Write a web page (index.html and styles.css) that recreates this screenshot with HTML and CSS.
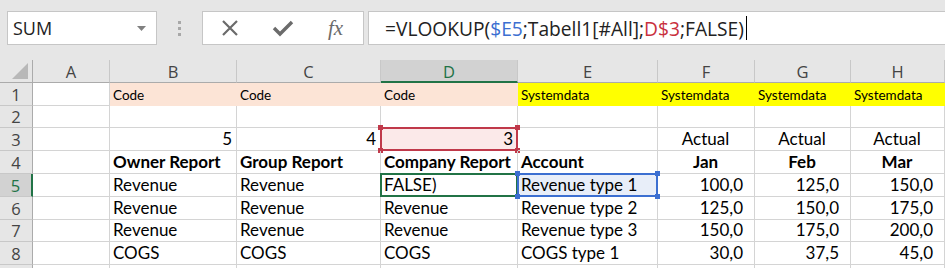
FILE: index.html
```html
<!DOCTYPE html>
<html>
<head>
  <meta charset="UTF-8">
  <title>Book1 - Excel</title>
  <link rel="stylesheet" href="styles.css">
</head>
<body>
  <div class="app">
    <div class="formula-bar">
      <div class="name-box">
        <span>SUM</span>
        <svg class="dropdown" width="9" height="5" viewBox="0 0 9 5"><path d="M0 0H9L4.5 5Z" fill="#808080"/></svg>
      </div>
      <div class="grip"><i></i><i></i><i></i></div>
      <div class="fx-buttons">
        <svg width="20" height="20" viewBox="0 0 20 20"><path d="M3 3L17 17M17 3L3 17" stroke="#6b6b6b" stroke-width="2.2" fill="none"/></svg>
        <svg class="check" width="22" height="20" viewBox="0 0 22 20"><path d="M2 10L8 16L20 4" stroke="#6b6b6b" stroke-width="3.4" fill="none"/></svg>
        <span class="fx">fx</span>
      </div>
      <div class="formula-input">=VLOOKUP(<span class="ref-blue">$E5</span>;Tabell1[#All];<span class="ref-red">D$3</span>;FALSE)<span class="caret"></span></div>
    </div>

    <div class="sheet">
      <!-- column headers -->
      <div class="hd corner"><span class="tri"></span></div>
      <div class="hd">A</div>
      <div class="hd">B</div>
      <div class="hd">C</div>
      <div class="hd hd-active">D</div>
      <div class="hd">E</div>
      <div class="hd">F</div>
      <div class="hd">G</div>
      <div class="hd">H</div>

      <!-- row 1 -->
      <div class="rh">1</div>
      <div class="c"></div>
      <div class="c small fill-orange">Code</div>
      <div class="c small fill-orange">Code</div>
      <div class="c small fill-orange">Code</div>
      <div class="c small fill-yellow">Systemdata</div>
      <div class="c small fill-yellow">Systemdata</div>
      <div class="c small fill-yellow">Systemdata</div>
      <div class="c small fill-yellow">Systemdata</div>

      <!-- row 2 -->
      <div class="rh">2</div>
      <div class="c"></div>
      <div class="c"></div>
      <div class="c"></div>
      <div class="c"></div>
      <div class="c"></div>
      <div class="c"></div>
      <div class="c"></div>
      <div class="c"></div>

      <!-- row 3 -->
      <div class="rh">3</div>
      <div class="c"></div>
      <div class="c right">5</div>
      <div class="c right">4</div>
      <div class="c right fill-pink">3<span class="sel sel-red"><i class="h tl"></i><i class="h tr"></i><i class="h bl"></i><i class="h br"></i></span></div>
      <div class="c"></div>
      <div class="c center">Actual</div>
      <div class="c center">Actual</div>
      <div class="c center">Actual</div>

      <!-- row 4 -->
      <div class="rh">4</div>
      <div class="c"></div>
      <div class="c bold">Owner Report</div>
      <div class="c bold">Group Report</div>
      <div class="c bold">Company Report</div>
      <div class="c bold">Account</div>
      <div class="c bold center">Jan</div>
      <div class="c bold center">Feb</div>
      <div class="c bold center">Mar</div>

      <!-- row 5 -->
      <div class="rh rh-active">5</div>
      <div class="c"></div>
      <div class="c">Revenue</div>
      <div class="c">Revenue</div>
      <div class="c">FALSE)<span class="sel sel-green"></span></div>
      <div class="c fill-blue">Revenue type 1<span class="sel sel-blue"><i class="h tl"></i><i class="h tr"></i><i class="h bl"></i><i class="h br"></i></span></div>
      <div class="c num">100,0</div>
      <div class="c num">125,0</div>
      <div class="c num">150,0</div>

      <!-- row 6 -->
      <div class="rh">6</div>
      <div class="c"></div>
      <div class="c">Revenue</div>
      <div class="c">Revenue</div>
      <div class="c">Revenue</div>
      <div class="c">Revenue type 2</div>
      <div class="c num">125,0</div>
      <div class="c num">150,0</div>
      <div class="c num">175,0</div>

      <!-- row 7 -->
      <div class="rh">7</div>
      <div class="c"></div>
      <div class="c">Revenue</div>
      <div class="c">Revenue</div>
      <div class="c">Revenue</div>
      <div class="c">Revenue type 3</div>
      <div class="c num">150,0</div>
      <div class="c num">175,0</div>
      <div class="c num">200,0</div>

      <!-- row 8 -->
      <div class="rh">8</div>
      <div class="c"></div>
      <div class="c">COGS</div>
      <div class="c">COGS</div>
      <div class="c">COGS</div>
      <div class="c">COGS type 1</div>
      <div class="c num">30,0</div>
      <div class="c num">37,5</div>
      <div class="c num">45,0</div>

      <!-- row 9, cut off by the window -->
      <div class="rh last"></div>
      <div class="c last"></div>
      <div class="c last"></div>
      <div class="c last"></div>
      <div class="c last"></div>
      <div class="c last"></div>
      <div class="c last"></div>
      <div class="c last"></div>
      <div class="c last"></div>
    </div>
  </div>
</body>
</html>
```

FILE: styles.css
```css
body {
  margin: 0;
  width: 945px;
  height: 268px;
  overflow: hidden;
  background: #e6e6e6;
  font-family: Lato, "Liberation Sans", sans-serif;
}
.app {
  display: flex;
  flex-direction: column;
}

/* formula bar */
.formula-bar {
  display: flex;
  align-items: flex-start;
  height: 60px;
  padding-top: 11px;
  box-sizing: border-box;
}
.name-box {
  display: flex;
  align-items: center;
  justify-content: space-between;
  width: 150px;
  height: 34px;
  margin-left: 7px;
  padding: 0 10px 0 5px;
  box-sizing: border-box;
  background: #fff;
  border: 1px solid #c6c6c6;
  font-family: "Open Sans", sans-serif;
  font-size: 18px;
  color: #222;
}
.grip {
  display: flex;
  flex-direction: column;
  gap: 3px;
  width: 45px;
  height: 34px;
  align-items: center;
  justify-content: center;
}
.grip i {
  display: block;
  width: 3px;
  height: 3px;
  background: #a8a8a8;
}
.fx-buttons {
  display: flex;
  align-items: center;
  gap: 32px;
  width: 162px;
  height: 34px;
  padding-left: 17px;
  box-sizing: border-box;
  background: #fff;
  border: 1px solid #c6c6c6;
}
.fx {
  margin-left: 2px;
  font-family: "Liberation Serif", serif;
  font-style: italic;
  font-size: 21px;
  color: #6b6b6b;
}
.formula-input {
  flex: 1;
  display: flex;
  align-items: center;
  height: 34px;
  margin-left: 4px;
  padding-left: 16px;
  box-sizing: border-box;
  background: #fff;
  border: 1px solid #c6c6c6;
  border-right: none;
  font-family: "Open Sans", sans-serif;
  font-size: 19.2px;
  color: #222;
  white-space: pre;
}
.ref-blue { color: #3c6fd1; }
.ref-red { color: #c9303e; }
.caret {
  display: inline-block;
  width: 1px;
  height: 24px;
  margin-left: 2px;
  background: #000;
}

/* sheet */
.sheet {
  display: grid;
  grid-template-columns: 33px 77px 127px 144px 137px 140px 97px 96px 94px;
  grid-template-rows: 23px 23px 22px 23px 23px 23px 23px 22px 23px 3px;
  background: #fff;
}
.hd, .rh {
  display: flex;
  align-items: center;
  justify-content: center;
  background: #e6e6e6;
  color: #444;
  font-family: "Open Sans", sans-serif;
  font-size: 16.5px;
  box-sizing: border-box;
}
.hd {
  border-right: 1px solid #c8c8c8;
  border-bottom: 1px solid #ababab;
  padding-top: 1px;
}
.hd.corner {
  position: relative;
  border-right: 1px solid #ababab;
}
.tri {
  position: absolute;
  right: 4px;
  bottom: 3px;
  width: 0;
  height: 0;
  border-left: 16px solid transparent;
  border-bottom: 16px solid #b8b8b8;
}
.hd-active {
  background: #d2d2d2;
  color: #217346;
  border-bottom: 2px solid #217346;
}
.rh {
  border-right: 1px solid #ababab;
  border-bottom: 1px solid #c8c8c8;
}
.rh-active {
  background: #d2d2d2;
  color: #217346;
  border-right: 2px solid #217346;
}

.c {
  position: relative;
  display: flex;
  align-items: flex-end;
  padding: 0 4px 1px 3px;
  box-sizing: border-box;
  border-right: 1px solid #d4d4d4;
  border-bottom: 1px solid #d4d4d4;
  font-size: 17px;
  line-height: 20px;
  color: #000;
  white-space: nowrap;
}
.last {
  border-bottom: none;
}
.c.small {
  font-size: 13.5px;
  line-height: 18px;
  padding-bottom: 1px;
}
.c.bold { font-weight: bold; }
.c.right { justify-content: flex-end; }
.c.center { justify-content: center; }
.c.num {
  justify-content: flex-end;
  padding-right: 11px;
}
.fill-orange {
  background: #fce4d6;
  border-color: #fce4d6;
}
.fill-yellow {
  background: #ffff00;
  border-color: #ffff00;
}
.fill-pink { background: #fbe9e9; }
.fill-blue { background: #e8eef9; }

/* selection frames drawn over cells */
.sel {
  position: absolute;
  left: -1px;
  top: -1px;
  right: -1px;
  bottom: -1px;
  border: 2px solid;
  pointer-events: none;
}
.sel-red { border-color: #c0394a; }
.sel-green { border-color: #217346; z-index: 1; }
.sel-blue { border-color: #3c6fd1; z-index: 2; }
.sel .h {
  position: absolute;
  width: 5px;
  height: 5px;
}
.sel-red .h { background: #c0394a; }
.sel-blue .h { background: #3c6fd1; }
.h.tl { left: -4px; top: -4px; }
.h.tr { right: -4px; top: -4px; }
.h.bl { left: -4px; bottom: -4px; }
.h.br { right: -4px; bottom: -4px; }
```
